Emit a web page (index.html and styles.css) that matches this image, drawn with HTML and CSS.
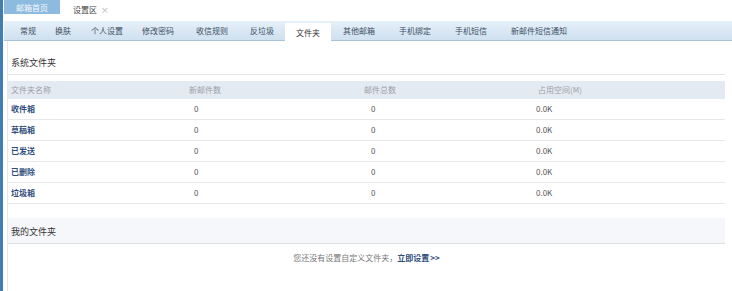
FILE: index.html
```html
<!DOCTYPE html>
<html lang="zh-CN">
<head>
  <meta charset="UTF-8">
  <title>设置区 - 文件夹</title>
  <link rel="stylesheet" href="styles.css">
</head>
<body>
  <div class="frame">
    <div class="top-tabs">
      <span class="home-tab">邮箱首页</span>
      <span class="cur-tab">设置区 <i>×</i></span>
    </div>

    <div class="tabs">
      <a>常规</a>
      <a>换肤</a>
      <a>个人设置</a>
      <a>修改密码</a>
      <a>收信规则</a>
      <a>反垃圾</a>
      <a class="active">文件夹</a>
      <a>其他邮箱</a>
      <a>手机绑定</a>
      <a>手机短信</a>
      <a>新邮件短信通知</a>
    </div>

    <div class="content">
      <div class="sec-title">系统文件夹</div>

      <div class="folders">
        <div class="row head">
          <span>文件夹名称</span>
          <span>新邮件数</span>
          <span>邮件总数</span>
          <span>占用空间(M)</span>
        </div>
        <div class="row">
          <span class="name">收件箱</span><span>0</span><span>0</span><span>0.0K</span>
        </div>
        <div class="row">
          <span class="name">草稿箱</span><span>0</span><span>0</span><span>0.0K</span>
        </div>
        <div class="row">
          <span class="name">已发送</span><span>0</span><span>0</span><span>0.0K</span>
        </div>
        <div class="row">
          <span class="name">已删除</span><span>0</span><span>0</span><span>0.0K</span>
        </div>
        <div class="row">
          <span class="name">垃圾箱</span><span>0</span><span>0</span><span>0.0K</span>
        </div>
      </div>

      <div class="sec-title mine">我的文件夹</div>

      <p class="empty">您还没有设置自定义文件夹，<a>立即设置</a><b>&gt;&gt;</b></p>
    </div>
  </div>
</body>
</html>
```

FILE: styles.css
```css
body {
  margin: 0;
  font-family: "Noto Sans CJK SC", "Liberation Sans", sans-serif;
  font-size: 8px;
  color: #333;
  background-color: #fff;
}
.frame {
  display: flex;
  flex-direction: column;
  min-height: 100vh;
  border-left: 3px solid #3f7db3;
  box-sizing: border-box;
  padding-left: 1px;
}
.top-tabs {
  display: flex;
  height: 21px;
  align-items: flex-start;
}
.home-tab {
  width: 56px;
  height: 14px;
  line-height: 15px;
  text-align: center;
  color: #f4f9fd;
  background-color: #8dbbe0;
}
.cur-tab {
  margin-left: 13px;
  line-height: 20px;
  color: #444;
}
.cur-tab i {
  font-style: normal;
  color: #aaa;
  margin-left: 2px;
}
.tabs {
  display: flex;
  height: 19px;
  padding-left: 5px;
  background: linear-gradient(#e6f0f9, #cfe0ef);
  border-bottom: 1px solid #a9c3da;
}
.tabs a {
  padding: 0 11px;
  line-height: 19px;
  color: #3c4f63;
  white-space: nowrap;
}
.tabs a:nth-child(2) {
  padding-left: 8px;
  padding-right: 9px;
}
.tabs a:nth-child(3) {
  padding-right: 8px;
}
.tabs a.active ~ a {
  padding: 0 12px;
}
.tabs a.active {
  margin-top: 2px;
  margin-bottom: -1px;
  line-height: 19px;
  background-color: #fff;
  color: #333;
}
.content {
  flex: 1;
  margin-left: 3px;
  border-left: 1px solid #e4e8ec;
  padding-right: 7px;
}
.sec-title {
  height: 33px;
  line-height: 44px;
  padding-left: 3px;
  font-size: 9px;
  color: #333;
  border-bottom: 1px solid #e2e4e6;
}
.folders {
  margin-top: 6px;
}
.row {
  display: grid;
  grid-template-columns: 173px 175px 175px 1fr;
  height: 20px;
  line-height: 20px;
  border-bottom: 1px solid #e8e8e8;
  color: #555;
}
.row span {
  padding-left: 3px;
}
.row span:nth-child(2) {
  padding-left: 13px;
}
.row span:nth-child(3) {
  padding-left: 15px;
}
.row span:nth-child(4) {
  padding-left: 5px;
}
.row.head {
  height: 18px;
  line-height: 18px;
  background-color: #e4eaf2;
  border-bottom: none;
  color: #9aa0a8;
}
.row.head span:nth-child(2),
.row.head span:nth-child(3) {
  padding-left: 8px;
}
.row.head span:nth-child(4) {
  padding-left: 7px;
}
.row .name {
  color: #2f4d7c;
  font-weight: bold;
}
.sec-title.mine {
  margin-top: 14px;
  height: 25px;
  line-height: 27px;
  background-color: #f5f7fa;
  border-bottom: 1px solid #dde0e3;
}
.empty {
  margin: 8px 0 0;
  text-align: center;
  color: #777;
}
.empty a {
  color: #2f4d7c;
  font-weight: bold;
}
.empty b {
  color: #2f4d7c;
  margin-left: 1px;
}
```
